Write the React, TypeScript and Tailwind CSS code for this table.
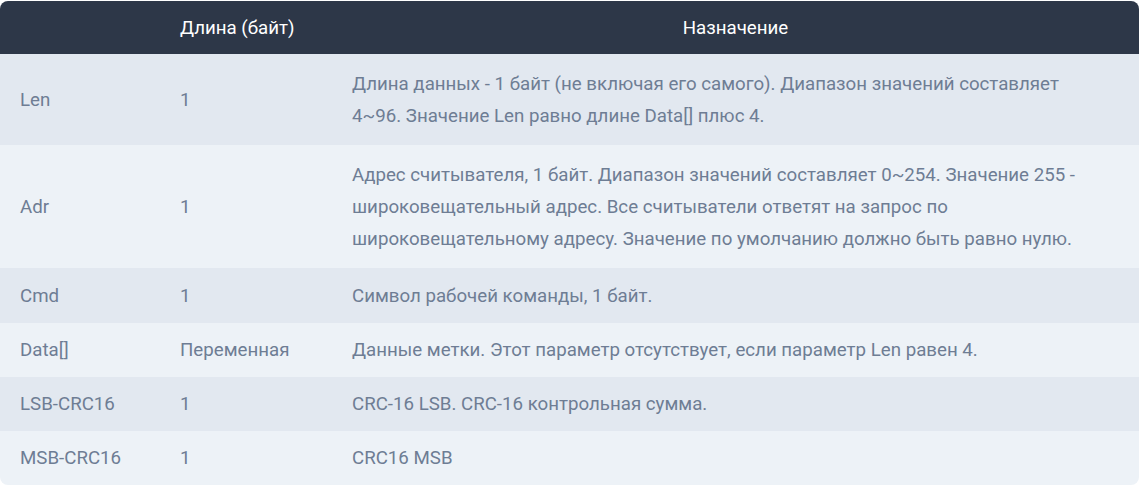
const rows = [
  {
    field: "Len",
    size: "1",
    desc: "Длина данных - 1 байт (не включая его самого). Диапазон значений составляет 4~96. Значение Len равно длине Data[] плюс 4.",
    h: "h-[91px]",
  },
  {
    field: "Adr",
    size: "1",
    desc: "Адрес считывателя, 1 байт. Диапазон значений составляет 0~254. Значение 255 - широковещательный адрес. Все считыватели ответят на запрос по широковещательному адресу. Значение по умолчанию должно быть равно нулю.",
    h: "h-[123px]",
  },
  { field: "Cmd", size: "1", desc: "Символ рабочей команды, 1 байт.", h: "h-[55px]" },
  {
    field: "Data[]",
    size: "Переменная",
    desc: "Данные метки. Этот параметр отсутствует, если параметр Len равен 4.",
    h: "h-[54px]",
  },
  { field: "LSB-CRC16", size: "1", desc: "CRC-16 LSB. CRC-16 контрольная сумма.", h: "h-[54px]" },
  { field: "MSB-CRC16", size: "1", desc: "CRC16 MSB", h: "h-[54px]" },
];

export default function App() {
  return (
    <div className="w-[1140px] h-[487px] bg-white pt-px pr-px font-['Roboto',sans-serif]">
      <div className="rounded-lg overflow-hidden">
        <table className="w-full border-collapse table-fixed text-[18.7px] leading-8">
          <colgroup>
            <col className="w-[160px]" />
            <col className="w-[172px]" />
            <col />
          </colgroup>
          <thead>
            <tr className="bg-[#2d3748] text-white h-[53px]">
              <th className="px-5 text-left font-normal"></th>
              <th className="px-5 text-left font-normal">Длина (байт)</th>
              <th className="px-5 text-center font-normal">Назначение</th>
            </tr>
          </thead>
          <tbody className="text-[#6e7d94]">
            {rows.map((row, i) => (
              <tr
                key={row.field}
                className={`${row.h} ${i % 2 === 0 ? "bg-[#e2e8f0]" : "bg-[#edf2f7]"}`}
              >
                <td className="px-5 align-middle">{row.field}</td>
                <td className="px-5 align-middle">{row.size}</td>
                <td className="pl-5 pr-8 align-middle">{row.desc}</td>
              </tr>
            ))}
          </tbody>
        </table>
      </div>
    </div>
  );
}
